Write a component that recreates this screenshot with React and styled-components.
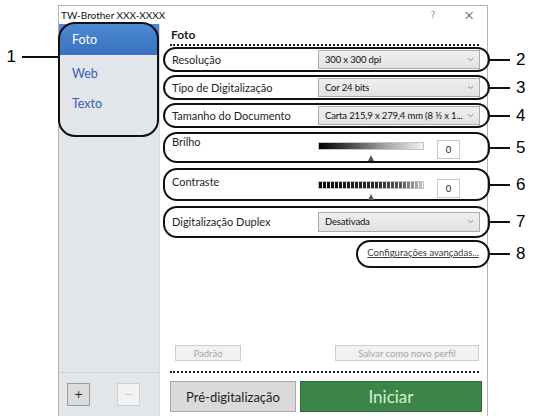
import styled, { createGlobalStyle } from 'styled-components'

const GlobalStyle = createGlobalStyle`
  html, body {
    margin: 0;
    padding: 0;
    background: #fff;
  }
  * {
    box-sizing: border-box;
  }
`

const UI_FONT = `'Lato', 'Open Sans', sans-serif`

const Page = styled.div`
  width: 545px;
  height: 416px;
  overflow: hidden;
  position: relative;
  display: flex;
  padding: 5px 0 0 58px;
  font-family: ${UI_FONT};
  color: #1e1e1e;
`

const Window = styled.div`
  width: 430px;
  height: 430px;
  display: flex;
  flex-direction: column;
  border: 1px solid #b4b4b4;
  border-bottom: none;
  background: #fff;
`

const TitleBar = styled.div`
  height: 18px;
  display: flex;
  align-items: center;
  padding: 0 0 0 2px;
  font-size: 10px;
  color: #111;
  span {
    flex: 1;
  }
`

const TitleButton = styled.div`
  width: 36px;
  text-align: center;
  font-size: ${props => props.big ? '14px' : '10px'};
  color: #333;
  font-family: 'DejaVu Sans', sans-serif;
  font-weight: 300;
`

const Body = styled.div`
  flex: 1;
  display: grid;
  grid-template-columns: 101px 1fr;
`

const Sidebar = styled.div`
  background: #e2e5ea;
  display: flex;
  flex-direction: column;
  border-right: 1px solid #d8dbe0;
`

const ProfileList = styled.div`
  position: relative;
  height: 349px;
  display: flex;
  flex-direction: column;
  border-bottom: 1px solid #cfd3da;
`

const ProfileItem = styled.div`
  height: ${props => props.active ? '31px' : '30px'};
  display: flex;
  align-items: center;
  padding-left: 13px;
  font-size: 12.5px;
  color: ${props => props.active ? '#fff' : '#3a5fb4'};
  background: ${props => props.active ? 'linear-gradient(180deg, #4d8ad0 0%, #3772bf 100%)' : 'transparent'};
  margin-bottom: ${props => props.active ? '3px' : '0'};
`

const Ring = styled.div`
  position: absolute;
  top: ${props => props.top}px;
  left: ${props => props.left}px;
  width: ${props => props.w}px;
  height: ${props => props.h}px;
  border: 2px solid #111;
  border-radius: ${props => props.radius || 16}px;
  pointer-events: none;
`

const LeftCallout = styled.div`
  position: absolute;
  top: 23px;
  right: 100%;
  display: flex;
  align-items: center;
  font-family: 'Liberation Sans', Arial, sans-serif;
  font-size: 17px;
  color: #000;
  &::after {
    content: '';
    width: 38px;
    height: 2px;
    margin-left: 6px;
    background: #111;
  }
`

const SidebarFooter = styled.div`
  display: flex;
  gap: 27px;
  padding: 10px 0 0 8px;
`

const SquareButton = styled.div`
  width: 23px;
  height: 23px;
  display: flex;
  align-items: center;
  justify-content: center;
  font-size: 11px;
  font-family: 'DejaVu Sans', sans-serif;
  color: ${props => props.disabled ? '#c8c8c8' : '#222'};
  background: ${props => props.disabled ? '#f2f2f2' : '#dcdcdc'};
  border: 1px solid ${props => props.disabled ? '#d0d0d0' : '#9c9c9c'};
`

const Main = styled.div`
  display: flex;
  flex-direction: column;
  padding: 0 5px 0 10px;
`

const SectionTitle = styled.div`
  font-weight: 700;
  font-size: 12px;
  padding: 3px 0 2px 1px;
  border-bottom: 2px dotted #222;
  margin-right: 4px;
`

const Rows = styled.div`
  display: flex;
  flex-direction: column;
  gap: 3px;
  margin: 1px -7px 0 -7px;
`

const Row = styled.div`
  position: relative;
  height: ${props => props.h}px;
  margin-top: ${props => props.mt || 0}px;
  display: flex;
  align-items: ${props => props.top ? 'flex-start' : 'center'};
  padding: ${props => props.top ? `${props.top}px` : '0'} 7px 1px 7px;
  border: 2px solid #111;
  border-radius: 14px;
`

const Label = styled.div`
  width: 146px;
  font-size: 11px;
  color: #1e1e1e;
  line-height: 13px;
`

const Select = styled.div`
  width: 162px;
  height: ${props => props.tall ? 20 : 19}px;
  display: flex;
  align-items: center;
  justify-content: space-between;
  padding: 0 5px 0 6px;
  font-size: 9.5px;
  letter-spacing: -0.15px;
  color: #111;
  background: linear-gradient(180deg, #efefef, #e2e2e2);
  border: 1px solid #acacac;
  white-space: nowrap;
  span {
    overflow: hidden;
    margin-right: 4px;
  }
  svg {
    flex: none;
  }
`

const SliderGroup = styled.div`
  display: flex;
  align-items: flex-start;
  gap: 13px;
  margin-top: ${props => props.offset}px;
`

const Track = styled.div`
  display: flex;
  flex-direction: column;
  align-items: center;
  gap: 5px;
  padding-top: 2px;
`

const Bar = styled.div`
  width: 106px;
  height: 8px;
  border: 1px solid #c4c4c4;
  background: ${props => props.striped
    ? 'repeating-linear-gradient(90deg, transparent 0 3px, #f6f6f6 3px 4px), linear-gradient(90deg, #0a0a0a 0%, #2a2a2a 55%, #5a5a5a 80%, #c8c8c8 100%)'
    : 'linear-gradient(90deg, #000 0%, #3a3a3a 25%, #9a9a9a 60%, #f2f2f2 100%)'};
`

const Thumb = styled.div`
  width: 0;
  height: 0;
  border-left: 3px solid transparent;
  border-right: 3px solid transparent;
  border-bottom: 6px solid #555;
`

const ValueBox = styled.div`
  width: 23px;
  height: 19px;
  display: flex;
  align-items: center;
  justify-content: center;
  font-size: 9.5px;
  color: #222;
  border: 1px solid #c8c8c8;
  background: #fff;
`

const Callout = styled.div`
  position: absolute;
  left: 100%;
  top: 50%;
  transform: translateY(-50%);
  display: flex;
  align-items: center;
  font-family: 'Liberation Sans', Arial, sans-serif;
  font-size: 17px;
  color: #000;
  &::before {
    content: '';
    width: 22px;
    height: 2px;
    margin-right: 6px;
    background: #111;
  }
`

const LinkRow = styled.div`
  position: relative;
  align-self: flex-end;
  width: 134px;
  height: 28px;
  margin-top: -1px;
  display: flex;
  align-items: center;
  justify-content: flex-end;
  padding-right: 9px;
  border: 2px solid #111;
  border-radius: 14px;
  a {
    font-size: 9.5px;
    color: #3b3b3b;
    text-decoration: underline;
    margin-top: -3px;
  }
`

const Spacer = styled.div`
  flex: 1;
`

const ProfileButtons = styled.div`
  display: flex;
  justify-content: space-between;
  padding: 0 4px 0 5px;
`

const FlatButton = styled.div`
  width: ${props => props.w}px;
  height: 16px;
  display: flex;
  align-items: center;
  justify-content: center;
  font-size: 9.5px;
  color: #a6a6a6;
  background: #f1f1f1;
  border: 1px solid #cdcdcd;
`

const Divider = styled.div`
  height: 0;
  border-top: 2px dotted #222;
  margin: 10px 4px 8px 0;
`

const ActionRow = styled.div`
  display: flex;
  gap: 4px;
  margin: 0 1px 23px 0;
`

const ActionButton = styled.div`
  width: ${props => props.primary ? '182px' : '126px'};
  height: 31px;
  display: flex;
  align-items: center;
  justify-content: center;
  font-size: ${props => props.primary ? '17px' : '13px'};
  color: ${props => props.primary ? '#d6f0d4' : '#1e1e1e'};
  background: ${props => props.primary ? '#3b8646' : '#dadada'};
  border: 1px solid ${props => props.primary ? '#2f6d38' : '#a8a8a8'};
`

const Chevron = () => (
  <svg width="7" height="5" viewBox="0 0 7 5">
    <path d="M1 1.2 L3.5 3.6 L6 1.2" fill="none" stroke="#888" strokeWidth="1" />
  </svg>
)

const SelectRow = ({ label, value, h, mt, num, tall }) => (
  <Row h={h} mt={mt}>
    <Label>{label}</Label>
    <Select tall={tall}>
      <span>{value}</span>
      <Chevron />
    </Select>
    <Callout>{num}</Callout>
  </Row>
)

const SliderRow = ({ label, h, mt, top, offset, striped, num }) => (
  <Row h={h} mt={mt} top={top}>
    <Label>{label}</Label>
    <SliderGroup offset={offset}>
      <Track>
        <Bar striped={striped} />
        <Thumb />
      </Track>
      <ValueBox>0</ValueBox>
    </SliderGroup>
    <Callout>{num}</Callout>
  </Row>
)

export default function App() {
  return (
    <>
      <GlobalStyle />
      <Page>
        <Window>
          <TitleBar>
            <span>TW-Brother XXX-XXXX</span>
            <TitleButton>?</TitleButton>
            <TitleButton big>×</TitleButton>
          </TitleBar>
          <Body>
            <Sidebar>
              <ProfileList>
                <ProfileItem active>Foto</ProfileItem>
                <ProfileItem>Web</ProfileItem>
                <ProfileItem>Texto</ProfileItem>
                <Ring top={-2} left={-1} w={101} h={115} radius={17}>
                  <LeftCallout>1</LeftCallout>
                </Ring>
              </ProfileList>
              <SidebarFooter>
                <SquareButton>+</SquareButton>
                <SquareButton disabled>−</SquareButton>
              </SidebarFooter>
            </Sidebar>
            <Main>
              <SectionTitle>Foto</SectionTitle>
              <Rows>
                <SelectRow label="Resolução" value="300 x 300 dpi" h={25} num="2" />
                <SelectRow label="Tipo de Digitalização" value="Cor 24 bits" h={25} num="3" />
                <SelectRow label="Tamanho do Documento" value="Carta 215,9 x 279,4 mm (8 ½ x 1..." h={25} num="4" />
                <SliderRow label="Brilho" h={31} mt={1} top={1} offset={5} num="5" />
                <SliderRow label="Contraste" h={33} mt={2} top={5} offset={4} striped num="6" />
                <SelectRow label="Digitalização Duplex" value="Desativada" h={32} mt={2} num="7" tall />
                <LinkRow>
                  <a>Configurações avançadas...</a>
                  <Callout>8</Callout>
                </LinkRow>
              </Rows>
              <Spacer />
              <ProfileButtons>
                <FlatButton w={66}>Padrão</FlatButton>
                <FlatButton w={144}>Salvar como novo perfil</FlatButton>
              </ProfileButtons>
              <Divider />
              <ActionRow>
                <ActionButton>Pré-digitalização</ActionButton>
                <ActionButton primary>Iniciar</ActionButton>
              </ActionRow>
            </Main>
          </Body>
        </Window>
      </Page>
    </>
  )
}
